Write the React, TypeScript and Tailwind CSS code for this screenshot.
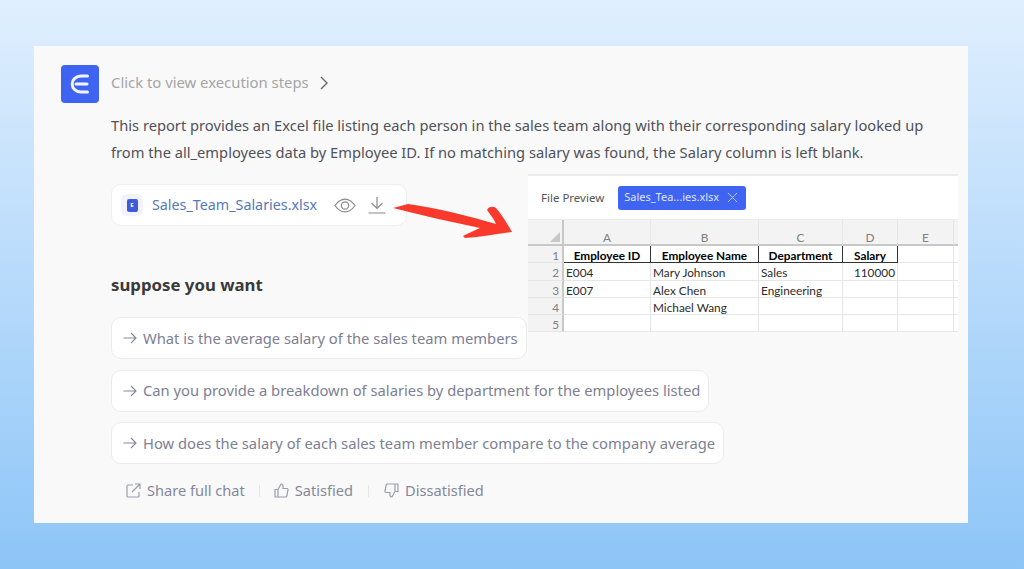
const F = "font-['Noto_Sans','Open_Sans',sans-serif]";

function Logo() {
  return (
    <div className="w-[38px] h-[38px] rounded-[4px] bg-[#3f64f1] flex items-center justify-center shrink-0">
      <svg width="20" height="22" viewBox="0 0 20 22" fill="none" stroke="#f2f5fe" strokeWidth="3" strokeLinecap="round">
        <path d="M17.5 3 H11 C5.8 3 2.2 6.4 2.2 11 C2.2 15.6 5.8 19 11 19 H17.5" />
        <path d="M6 11 H17" />
      </svg>
    </div>
  );
}

function Suggest({ text }: { text: string }) {
  return (
    <div className="self-start h-[42px] pl-[11px] pr-[8px] flex items-center gap-[6px] bg-white rounded-[10px] border border-[#ececf0] text-[14.75px] text-[#7d8093] whitespace-nowrap">
      <svg width="14" height="12" viewBox="0 0 14 12" fill="none" stroke="#85889a" strokeWidth="1.1">
        <path d="M0.5 6 H13 M8 1 L13 6 L8 11" />
      </svg>
      <span>{text}</span>
    </div>
  );
}

const columns = ["A", "B", "C", "D", "E"];
const rows = [
  ["Employee ID", "Employee Name", "Department", "Salary", ""],
  ["E004", "Mary Johnson", "Sales", "110000", ""],
  ["E007", "Alex Chen", "Engineering", "", ""],
  ["", "Michael Wang", "", "", ""],
  ["", "", "", "", ""],
];

function Sheet() {
  return (
    <div className="grid grid-cols-[36px_87px_108px_84px_55px_56px_4px] grid-rows-[26px_17px_18px_17px_17px_17px] font-['Lato',sans-serif] text-[11.8px] leading-none text-[#2b2b2b]">
      <div className="bg-[#f3f3f3] border-r-2 border-b-2 border-[#c8c8c8] flex items-end justify-end pr-[2px] pb-[2px]">
        <div className="w-0 h-0 border-l-[10px] border-l-transparent border-b-[10px] border-b-[#c8c8c8]" />
      </div>
      {columns.map((c) => (
        <div key={c} className="bg-[#f3f3f3] border-r border-b-2 border-b-[#c8c8c8] border-r-[#e6e6e6] flex items-center justify-center pt-[11px] text-[#808080]">
          {c}
        </div>
      ))}
      <div className="bg-[#f3f3f3] border-b-2 border-[#c8c8c8]" />
      {rows.map((row, r) => [
        <div key={`h${r}`} className="bg-[#f3f3f3] border-r-2 border-r-[#c8c8c8] border-b border-b-[#e6e6e6] flex items-center justify-end pr-[3px] pt-[3px] text-[#808080]">
          {r + 1}
        </div>,
        ...row.map((cell, c) => {
          const head = r === 0 && c < 4;
          const base = "flex items-center px-[2px] pt-[3px] whitespace-nowrap border-r border-b ";
          const look = head
            ? "justify-center font-bold text-black border-r-[#333333] border-b-[#333333]"
            : "border-r-[#e6e6e6] border-b-[#e6e6e6]";
          const align = r === 1 && c === 3 ? " justify-end" : "";
          return (
            <div key={`${r}-${c}`} className={base + look + align}>
              {cell}
            </div>
          );
        }),
        <div key={`e${r}`} className="border-b border-b-[#e6e6e6]" />,
      ])}
    </div>
  );
}

function Preview() {
  return (
    <div className="absolute left-[494px] top-[128px] w-[430px] h-[158px] bg-white border-t-2 border-[#ececec] flex flex-col overflow-hidden">
      <div className="h-[44px] shrink-0 border-b border-[#ededed] flex items-center pl-[13px] gap-[14px]">
        <span className="text-[11.5px] text-[#555555]">File Preview</span>
        <div className="h-[24px] w-[128px] rounded-[3px] bg-[#3f64f1] flex items-center pl-[6px] pr-[8px] justify-between text-[11px] text-[#dfe6ff]">
          <span>Sales_Tea...ies.xlsx</span>
          <svg width="11" height="11" viewBox="0 0 12 12" stroke="#c9d4fb" strokeWidth="1" fill="none">
            <path d="M1 1 L11 11 M11 1 L1 11" />
          </svg>
        </div>
      </div>
      <Sheet />
    </div>
  );
}

function Arrow() {
  return (
    <svg className="absolute left-[359px] top-[156px]" width="120" height="38" viewBox="0 0 120 38">
      <path
        d="M0 6 L15 2 C45 6 75 14 103 22 C101 17 97 12 94 8 C96 4 100 4 103 6 C109 13 114 21 119 30 C104 32 88 35 72 36 L70 34 C76 31 82 28 87 26 C58 20 28 13 0 6 Z"
        fill="#f8392b"
      />
    </svg>
  );
}

export default function App() {
  return (
    <div className={`w-[1024px] h-[569px] overflow-hidden pt-[46px] pl-[34px] bg-gradient-to-b from-[#e0effe] to-[#8dc5f7] ${F}`}>
      <div className="relative w-[934px] h-[477px] bg-[#f9f9f9] pl-[27px] pt-[19px] flex flex-col">
        <div className="flex gap-[12px] items-center h-[38px]">
          <Logo />
          <span className="text-[14.85px] text-[#a5a5a5] pb-[3px]">Click to view execution steps</span>
          <svg width="10" height="14" viewBox="0 0 10 14" fill="none" stroke="#6a6a6a" strokeWidth="1.4" className="-ml-[2px] mb-[2px]">
            <path d="M2 1 L8 7 L2 13" />
          </svg>
        </div>
        <div className="ml-[50px] mt-[9px] text-[14.7px] leading-[27px] text-[#4f5259] whitespace-nowrap">
          <p>This report provides an Excel file listing each person in the sales team along with their corresponding salary looked up</p>
          <p>from the all_employees data by Employee ID. If no matching salary was found, the Salary column is left blank.</p>
        </div>
        <div className="ml-[50px] mt-[18px] w-[296px] h-[42px] rounded-[10px] bg-white border border-[#efeff3] flex items-center pl-[9px] shrink-0">
          <div className="w-[22px] h-[22px] rounded-[6px] bg-[#f1f3fc] flex items-center justify-center">
            <div className="w-[11px] h-[13px] rounded-[2px] bg-[#3f5bd8] text-white text-[6px] font-bold flex items-center justify-center leading-none">E</div>
          </div>
          <span className="ml-[9px] text-[14.3px] text-[#5579b8]">Sales_Team_Salaries.xlsx</span>
          <svg className="ml-[17px]" width="22" height="15" viewBox="0 0 24 16" fill="none" stroke="#8a8a8a" strokeWidth="1.3">
            <path d="M1 8 C5 2.5 8.5 1 12 1 C15.5 1 19 2.5 23 8 C19 13.5 15.5 15 12 15 C8.5 15 5 13.5 1 8 Z" />
            <circle cx="12" cy="8" r="4" />
          </svg>
          <svg className="ml-[12px]" width="18" height="18" viewBox="0 0 18 18" fill="none" stroke="#8a8a8a" strokeWidth="1.2">
            <path d="M9 1 V12 M3.5 7 L9 12.5 L14.5 7 M0.5 17 H17.5" />
          </svg>
        </div>
        <div className="ml-[50px] mt-[48px] text-[16.8px] font-bold leading-[22px] text-[#3a3a3a]">suppose you want</div>
        <div className="ml-[50px] mt-[21px] flex flex-col gap-[10.5px]">
          <Suggest text="What is the average salary of the sales team members" />
          <Suggest text="Can you provide a breakdown of salaries by department for the employees listed" />
          <Suggest text="How does the salary of each sales team member compare to the company average" />
        </div>
        <div className="ml-[65px] mt-[16px] flex items-center text-[14.6px] text-[#85889a]">
          <svg width="15" height="15" viewBox="0 0 15 15" fill="none" stroke="#9a9cab" strokeWidth="1.2">
            <path d="M7 2 H2 C1.4 2 1 2.4 1 3 V13 C1 13.6 1.4 14 2 14 H12 C12.6 14 13 13.6 13 13 V9 M6 9 L13.5 1.5 M9 1 H14 V6" />
          </svg>
          <span className="ml-[6px]">Share full chat</span>
          <div className="mx-[14px] w-px h-[12px] bg-[#e6e6e6]" />
          <svg width="15" height="15" viewBox="0 0 15 15" fill="none" stroke="#9a9cab" strokeWidth="1.2">
            <path d="M1 6.5 H4 V14 H1 Z M4 6.5 L7 1 C8.5 1 9 2 9 3 V5.5 H13 C13.8 5.5 14.2 6.2 14 7 L12.8 13 C12.6 13.7 12.2 14 11.5 14 H4" />
          </svg>
          <span className="ml-[6px]">Satisfied</span>
          <div className="mx-[15px] w-px h-[12px] bg-[#e6e6e6]" />
          <svg width="15" height="15" viewBox="0 0 15 15" fill="none" stroke="#9a9cab" strokeWidth="1.2">
            <path d="M14 8.5 H11 V1 H14 Z M11 8.5 L8 14 C6.5 14 6 13 6 12 V9.5 H2 C1.2 9.5 0.8 8.8 1 8 L2.2 2 C2.4 1.3 2.8 1 3.5 1 H11" />
          </svg>
          <span className="ml-[6px]">Dissatisfied</span>
        </div>
        <Preview />
        <Arrow />
      </div>
    </div>
  );
}
